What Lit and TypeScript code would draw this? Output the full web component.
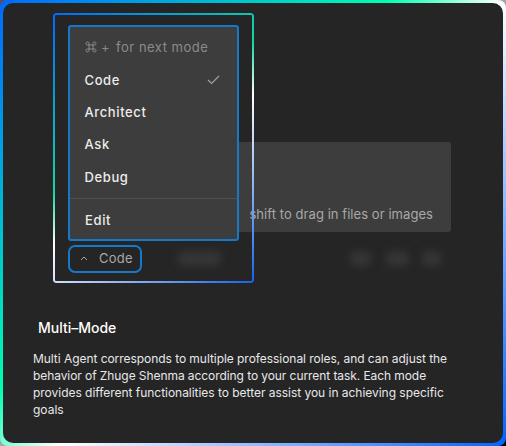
import { LitElement, html, css } from "lit";
import { customElement } from "lit/decorators.js";

@customElement("app-root")
export class AppRoot extends LitElement {
  static styles = css`
    :host { display: block; width: 506px; height: 446px; overflow: hidden; background: linear-gradient(135deg, #50545a 0%, #a4a6a8 45%, #a4a6a8 60%, #000 95%); font-family: Inter, "Noto Sans", sans-serif; }
    * { box-sizing: border-box; }
    .card { position: relative; width: 506px; height: 446px; padding: 3px; border-radius: 8px;
      background: linear-gradient(135deg, #0068ff 0%, #00ffb0 41%, #fff 53%, #0064ff 100%); }
    .surface { width: 500px; height: 440px; border-radius: 10px; background: #252526; padding: 10px 30px 0; overflow: hidden; }
    .demo { position: relative; height: 270px; margin-left: 20px; }
    .frame { position: absolute; inset: 0 auto auto 0; width: 201px; height: 270px; border-radius: 3px; padding: 2px;
      background: linear-gradient(143deg, #006aff 0%, #12d8a4 43%, #fff 55%, #1463ea 100%);
      mask: linear-gradient(#000 0 0) content-box exclude, linear-gradient(#000 0 0); }
    .prompt { position: absolute; left: 100px; top: 129px; width: 298px; height: 90px; border-radius: 3px; background: #3d3d3d;
      display: flex; align-items: flex-end; justify-content: flex-end; padding: 0 18px 9px; color: #a9a9a9; font-size: 13px; line-height: 18px; white-space: nowrap; letter-spacing: .06px; }
    .column { position: relative; width: 171px; margin-left: 15px; padding-top: 12px; }
    .menu { height: 216px; border: 2px solid #1478cb; border-radius: 3px; background: #3d3d3d; padding: 4px 0 0; color: #ececec; font-size: 13px; font-weight: 450; letter-spacing: .61px; }
    .item { display: flex; align-items: center; height: 32.3px; padding: 0 17px 0 14.5px; }
    .item svg { margin-left: auto; }
    .hint { color: #8b8b8b; font-weight: 400; letter-spacing: .5px; gap: 6px; height: 32.5px; padding-left: 15px; }
    .keys { font-size: 13px; display: flex; gap: 4px; align-items: center; }
    .hint .keys svg { margin: 0; }
    .rule { height: 1px; background: #505050; margin-top: 5.3px; }
    .edit { height: 42px; padding-left: 15px; letter-spacing: .65px; }
    .mode { margin-top: 4px; width: 74px; height: 28px; border: 2px solid #1478cb; border-radius: 7px; display: flex; align-items: center; padding: 0 0 2px 10px; gap: 11px; font-size: 13px; color: #a8a8a8; letter-spacing: .25px; }
    .ghost { position: absolute; background: #363637; filter: blur(4px); border-radius: 5px; top: 238px; height: 15px; }
    .g1 { left: 125px; width: 43px; } .g2 { left: 297px; width: 21px; } .g3 { left: 333px; width: 23px; } .g4 { left: 369px; width: 19px; }
    h1 { margin: 35px 0 0 5px; font-size: 14px; line-height: 20px; font-weight: 500; color: #fff; }
    .copy { margin-top: 12px; color: #e8e8e8; font-size: 12px; line-height: 17px; white-space: nowrap; }
    .l1 { letter-spacing: -.05px; } .l2 { letter-spacing: -.075px; } .l3 { letter-spacing: -.03px; }
  `;

  render() {
    return html`<div class="card"><div class="surface">
      <div class="demo">
        <div class="prompt">shift to drag in files or images</div>
        <div class="ghost g1"></div><div class="ghost g2"></div><div class="ghost g3"></div><div class="ghost g4"></div>
        <div class="frame"></div>
        <div class="column">
          <div class="menu">
            <div class="item hint"><span class="keys"><svg width="12" height="12" viewBox="0 0 12 12" fill="none" stroke="currentColor"><path d="M4 4H8V8H4ZM4 4H2.6A1.5 1.5 0 1 1 4 2.6ZM8 4V2.6A1.5 1.5 0 1 1 9.4 4ZM8 8H9.4A1.5 1.5 0 1 1 8 9.4ZM4 8V9.4A1.5 1.5 0 1 1 2.6 8Z"/></svg><span>+</span></span><span>for next mode</span></div>
            <div class="item">Code<svg width="13" height="10" viewBox="0 0 13 10" fill="none" stroke="#a0a0a0" stroke-width="1.2"><path d="M1 5L4.6 8.5L12 1"/></svg></div>
            <div class="item">Architect</div>
            <div class="item">Ask</div>
            <div class="item">Debug</div>
            <div class="rule"></div>
            <div class="item edit">Edit</div>
          </div>
          <div class="mode"><svg width="8" height="5" viewBox="0 0 8 5" fill="none" stroke="currentColor"><path d="M1 4L4 1L7 4"/></svg>Code</div>
        </div>
      </div>
      <h1>Multi–Mode</h1>
      <div class="copy">
        <div class="l1">Multi Agent corresponds to multiple professional roles, and can adjust the</div>
        <div class="l2">behavior of Zhuge Shenma according to your current task. Each mode</div>
        <div class="l3">provides different functionalities to better assist you in achieving specific</div>
        <div>goals</div>
      </div>
    </div></div>`;
  }
}
